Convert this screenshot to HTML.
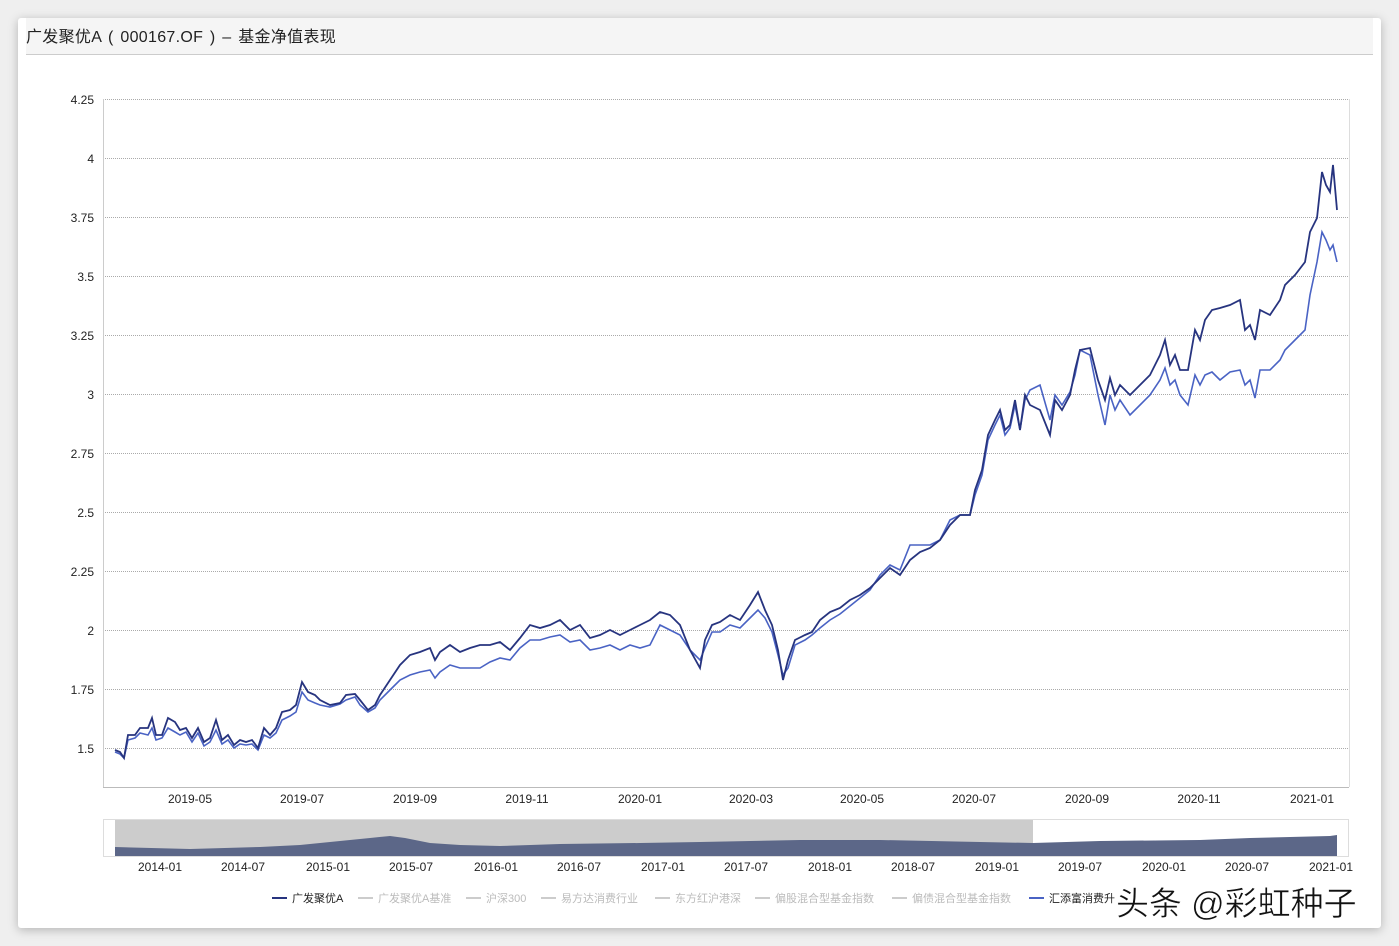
<!DOCTYPE html>
<html><head><meta charset="utf-8"><style>
body{margin:0;width:1399px;height:946px;background:#efefef;font-family:"Liberation Sans","Noto Sans CJK SC",sans-serif;overflow:hidden;position:relative}
.card{position:absolute;left:18px;top:18px;width:1363px;height:910px;background:#fff;box-shadow:0 2px 10px rgba(0,0,0,.25);border-radius:3px}
.hdr{position:absolute;left:8px;top:0;right:8px;height:36px;background:#f5f5f5;border-bottom:1px solid #ccc;font-size:16px;line-height:40px;color:#222;word-spacing:2px;letter-spacing:0.3px}
svg text{font-family:"Liberation Sans","Noto Sans CJK SC",sans-serif}
</style></head><body>
<div class="card"><div class="hdr">广发聚优A ( 000167.OF ) – 基金净值表现</div></div>
<svg width="1399" height="946" style="position:absolute;left:0;top:0">
<g stroke="#aaa" stroke-dasharray="1,1" stroke-width="1">
<line x1="103" y1="99.5" x2="1349" y2="99.5"/><line x1="103" y1="158.5" x2="1349" y2="158.5"/><line x1="103" y1="217.5" x2="1349" y2="217.5"/><line x1="103" y1="276.5" x2="1349" y2="276.5"/><line x1="103" y1="335.5" x2="1349" y2="335.5"/><line x1="103" y1="394.5" x2="1349" y2="394.5"/><line x1="103" y1="453.5" x2="1349" y2="453.5"/><line x1="103" y1="512.5" x2="1349" y2="512.5"/><line x1="103" y1="571.5" x2="1349" y2="571.5"/><line x1="103" y1="630.5" x2="1349" y2="630.5"/><line x1="103" y1="689.5" x2="1349" y2="689.5"/><line x1="103" y1="748.5" x2="1349" y2="748.5"/>
</g>
<line x1="103.5" y1="99" x2="103.5" y2="787" stroke="#ccc"/><line x1="1349.5" y1="99" x2="1349.5" y2="787" stroke="#ddd"/>
<line x1="103" y1="787.5" x2="1349" y2="787.5" stroke="#bbb"/>
<g font-size="12" fill="#222" text-anchor="end">
<text x="94" y="104">4.25</text><text x="94" y="163">4</text><text x="94" y="222">3.75</text><text x="94" y="281">3.5</text><text x="94" y="340">3.25</text><text x="94" y="399">3</text><text x="94" y="458">2.75</text><text x="94" y="517">2.5</text><text x="94" y="576">2.25</text><text x="94" y="635">2</text><text x="94" y="694">1.75</text><text x="94" y="753">1.5</text>
</g>
<g font-size="12" fill="#222" text-anchor="middle">
<text x="190" y="803">2019-05</text><text x="302" y="803">2019-07</text><text x="415" y="803">2019-09</text><text x="527" y="803">2019-11</text><text x="640" y="803">2020-01</text><text x="751" y="803">2020-03</text><text x="862" y="803">2020-05</text><text x="974" y="803">2020-07</text><text x="1087" y="803">2020-09</text><text x="1199" y="803">2020-11</text><text x="1312" y="803">2021-01</text>
</g>
<polyline fill="none" stroke="#4a63c4" stroke-width="1.6" points="115,752 120,754 124,758 128,740 135,738 140,733 148,735 152,728 156,740 162,738 168,728 175,732 180,735 186,732 192,742 198,733 204,746 210,742 216,730 222,744 228,740 234,748 240,744 246,745 252,744 258,750 264,735 270,738 276,733 282,720 290,716 296,712 302,692 308,700 315,703 320,705 330,707 340,704 346,700 355,697 360,705 368,712 375,708 380,700 390,690 400,680 410,675 420,672 430,670 435,678 440,672 450,665 460,668 470,668 480,668 490,662 500,658 510,660 520,648 530,640 540,640 550,637 560,635 570,642 580,640 590,650 600,648 610,645 620,650 630,645 640,648 650,645 660,625 670,630 680,635 690,650 700,660 705,648 712,632 720,632 730,625 740,628 750,618 758,610 765,618 772,632 778,655 783,675 788,668 795,645 805,640 812,635 820,628 830,620 840,614 850,606 860,598 870,590 880,575 890,565 900,570 910,545 920,545 930,545 940,540 950,520 960,515 970,515 975,495 982,475 988,440 995,425 1000,415 1005,435 1010,428 1015,405 1020,430 1025,400 1030,390 1040,385 1050,420 1055,395 1062,405 1070,392 1075,375 1080,350 1090,355 1098,395 1105,425 1110,395 1115,410 1120,400 1130,415 1140,405 1150,395 1160,380 1165,368 1170,385 1175,380 1180,395 1188,405 1195,375 1200,385 1205,375 1212,372 1220,380 1230,372 1240,370 1245,385 1250,380 1255,398 1260,370 1270,370 1280,360 1285,350 1295,340 1305,330 1310,295 1317,262 1322,232 1326,240 1330,250 1333,245 1337,262"/>
<polyline fill="none" stroke="#27347f" stroke-width="1.8" points="115,750 120,752 124,758 128,735 135,735 140,728 148,728 152,718 156,735 162,735 168,718 175,722 180,730 186,728 192,738 198,728 204,742 210,738 216,720 222,740 228,735 234,745 240,740 246,742 252,740 258,748 264,728 270,735 276,728 282,712 290,710 296,705 302,682 308,692 315,695 320,700 330,705 340,703 346,695 355,694 360,700 368,710 375,705 380,695 390,680 400,665 410,655 420,652 430,648 435,660 440,652 450,645 460,652 470,648 480,645 490,645 500,642 510,650 520,638 530,625 540,628 550,625 560,620 570,630 580,625 590,638 600,635 610,630 620,635 630,630 640,625 650,620 660,612 670,615 680,625 690,650 700,668 705,640 712,625 720,622 730,615 740,620 750,605 758,592 765,610 772,625 778,650 783,680 788,660 795,640 805,635 812,632 820,620 830,612 840,608 850,600 860,595 870,588 880,578 890,568 900,575 910,560 920,552 930,548 940,540 950,525 960,515 970,515 975,490 982,470 988,435 995,420 1000,410 1005,430 1010,425 1015,400 1020,430 1025,395 1030,405 1040,410 1050,435 1055,400 1062,410 1070,395 1075,370 1080,350 1090,348 1098,380 1105,400 1110,378 1115,395 1120,385 1130,395 1140,385 1150,375 1160,355 1165,340 1170,365 1175,355 1180,370 1188,370 1195,330 1200,340 1205,320 1212,310 1220,308 1230,305 1240,300 1245,330 1250,325 1255,340 1260,310 1270,315 1280,300 1285,285 1295,275 1305,262 1310,232 1317,218 1322,172 1326,185 1330,192 1333,165 1337,210"/>
<rect x="103.5" y="819.5" width="1245" height="37" fill="#fff" stroke="#ddd"/>
<rect x="115" y="820" width="918" height="36" fill="#ccc"/>
<path d="M115,847 L190,849 L260,847 L300,845 L330,842 L370,838 L390,836 L405,838 L430,843 L460,845 L500,846 L560,844 L640,843 L700,842 L800,840 L880,840 L980,842 L1033,843 L1100,841 L1200,840 L1250,838 L1330,836 L1337,835 L1337,856 L115,856Z" fill="#5c6788"/>
<g font-size="12" fill="#222" text-anchor="middle">
<text x="160" y="871">2014-01</text><text x="243" y="871">2014-07</text><text x="328" y="871">2015-01</text><text x="411" y="871">2015-07</text><text x="496" y="871">2016-01</text><text x="579" y="871">2016-07</text><text x="663" y="871">2017-01</text><text x="746" y="871">2017-07</text><text x="830" y="871">2018-01</text><text x="913" y="871">2018-07</text><text x="997" y="871">2019-01</text><text x="1080" y="871">2019-07</text><text x="1164" y="871">2020-01</text><text x="1247" y="871">2020-07</text><text x="1331" y="871">2021-01</text>
</g>
<g font-size="11">
<line x1="272" y1="898" x2="287" y2="898" stroke="#27347f" stroke-width="2"/><text x="292" y="902" fill="#222">广发聚优A</text>
<line x1="358" y1="898" x2="373" y2="898" stroke="#ccc" stroke-width="2"/><text x="378" y="902" fill="#bbb">广发聚优A基准</text>
<line x1="466" y1="898" x2="481" y2="898" stroke="#ccc" stroke-width="2"/><text x="486" y="902" fill="#bbb">沪深300</text>
<line x1="541" y1="898" x2="556" y2="898" stroke="#ccc" stroke-width="2"/><text x="561" y="902" fill="#bbb">易方达消费行业</text>
<line x1="655" y1="898" x2="670" y2="898" stroke="#ccc" stroke-width="2"/><text x="675" y="902" fill="#bbb">东方红沪港深</text>
<line x1="755" y1="898" x2="770" y2="898" stroke="#ccc" stroke-width="2"/><text x="775" y="902" fill="#bbb">偏股混合型基金指数</text>
<line x1="892" y1="898" x2="907" y2="898" stroke="#ccc" stroke-width="2"/><text x="912" y="902" fill="#bbb">偏债混合型基金指数</text>
<line x1="1029" y1="898" x2="1044" y2="898" stroke="#4a63c4" stroke-width="2"/><text x="1049" y="902" fill="#222">汇添富消费升</text>
</g>
<text x="1116" y="915" font-size="33" fill="#111" stroke="#fff" stroke-width="0.5">头条 @彩虹种子</text>
</svg>
</body></html>
